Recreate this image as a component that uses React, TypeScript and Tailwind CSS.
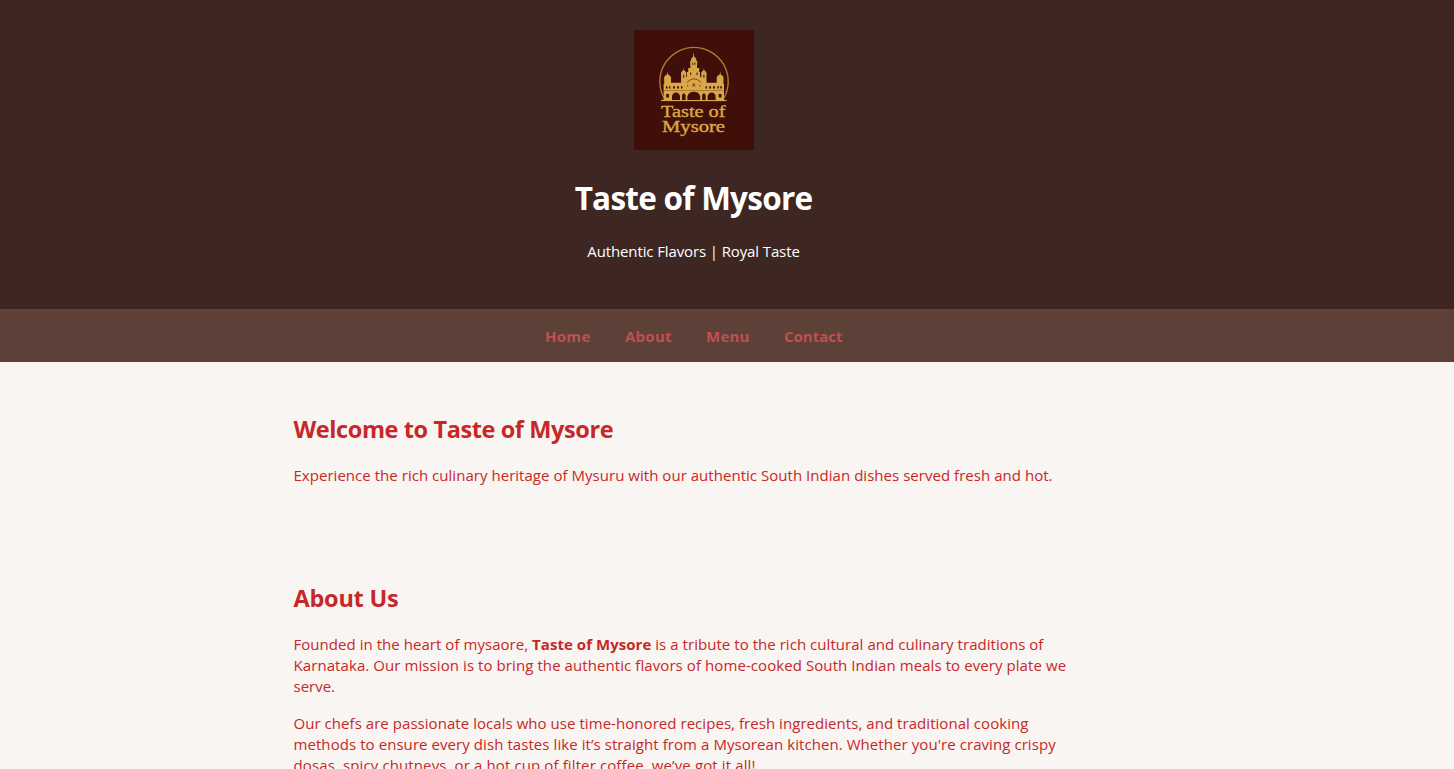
function Logo() {
  return (
    <svg
      viewBox="0 0 120 120"
      className="block size-[120px] bg-[#400f09]"
      role="img"
      aria-label="Taste of Mysore"
    >
      <path d="M30 68 A34.2 34.2 0 1 1 90 68" fill="none" stroke="#b07a30" strokeWidth="1.4" />
      <g fill="#d9a648">
        {/* central tower */}
        <path d="M59.7 22.5 L60.4 27 Q62.8 28 62.4 31 H63.2 V35 H63 V38 H65.2 V42 H66 V47 H67.5 V53 H51.5 V47 H53 V42 H54.2 V38 H56.4 V35 H56.2 V31 H57 Q56.6 28 59 27 Z" />
        {/* inner turrets */}
        <path d="M49.7 38 L50.2 40.6 Q53 42 52.3 44.5 V53 H47.1 V44.5 Q46.4 42 49.2 40.6 Z" />
        <path d="M69.9 38 L70.4 40.6 Q73.2 42 72.5 44.5 V53 H67.3 V44.5 Q66.6 42 69.4 40.6 Z" />
        {/* outer domes */}
        <path d="M33.5 41.5 L34 44.4 Q37.8 46 37 49.5 V54 H30.2 V49.5 Q29.4 46 33 44.4 Z" />
        <path d="M86.2 41.5 L86.7 44.4 Q90.3 46 89.5 49.5 V54 H82.7 V49.5 Q81.9 46 85.7 44.4 Z" />
        <path d="M47 53 Q53 47 60 46 Q67 47 73 53 V56 H47 Z" />
        <path d="M37 52.7 H83 V54 H90 V70 H29.6 V54 H37 Z" />
        <rect x="27" y="69.9" width="65.5" height="1.2" />
      </g>
      <g fill="#400f09">
        <path d="M53.4 69.9 V66.5 Q54.3 62 59.8 61.8 Q65.2 62 66.2 66.5 V69.9 Z" />
        <path d="M38 69.9 V66 Q39 62.6 42 62.4 Q45.2 62.6 46 66 V69.9 Z" />
        <path d="M73.6 69.9 V66 Q74.6 62.6 77.6 62.4 Q80.8 62.6 81.6 66 V69.9 Z" />
        <path d="M48 69.9 V65 Q49.8 61.4 51.6 65 V69.9 Z" />
        <path d="M68.1 69.9 V65 Q69.9 61.4 71.7 65 V69.9 Z" />
        <path d="M32.2 67.5 V64 H35 V67.5 Z M84.7 67.5 V64 H87.5 V67.5 Z" />
        <path d="M32 56.3h1.6v2.2H32z M35 56.3h1.4v2.2H35z M39 56.3h1.8v2.2h-1.8z M43 56.3h1.8v2.2h-1.8z M47 56.3h1.4v2.2H47z M71.6 56.3H73v2.2h-1.4z M75.2 56.3h1.8v2.2h-1.8z M79 56.3h1.8v2.2h-1.8z M83.4 56.3h1.4v2.2h-1.4z M86.3 56.3h1.6v2.2h-1.6z" />
        <path d="M58.4 32.5h.8v2.4h-.8z M60.5 32.5h.8v2.4h-.8z M49.2 44.8h1v3h-1z M69.4 44.8h1v3h-1z M56.2 42.5h1v2.4h-1z M62.6 42.5h1v2.4h-1z" />
      </g>
      <path d="M53 52.5 Q60 45 67 52.5" fill="none" stroke="#6b3015" strokeWidth=".8" />
      <path d="M58.4 56.4 V54.4 Q59.8 52.2 61.2 54.4 V56.4 Z M53 55h1.4v1.6h-1.4z M65.4 55h1.4v1.6h-1.4z" fill="#8b541f" />
      <path d="M30 60.5 H89.5" stroke="#8b541f" strokeWidth=".5" />
      <g fill="#d9a648" fontFamily="'Liberation Serif', serif" fontSize="17.2" stroke="#d9a648" strokeWidth=".4">
        <text x="27" y="86.6" textLength="64.5" lengthAdjust="spacingAndGlyphs">Taste of</text>
        <text x="28" y="102" textLength="63" lengthAdjust="spacingAndGlyphs">Mysore</text>
      </g>
    </svg>
  );
}

export default function App() {
  return (
    <div className="h-[769px] overflow-hidden bg-[#f9f5f2] font-['Open_Sans','Noto_Sans',sans-serif] text-[15px] leading-[21px] text-[#c62828]">
      <header className="flex h-[309px] flex-col items-center bg-[#3e2723] pt-[30px] pr-[67px] text-white">
        <Logo />
        <h1 className="mt-[26px] text-[31.5px] leading-[43px] font-bold tracking-[-0.75px] whitespace-nowrap">Taste of Mysore</h1>
        <p className="mt-[22px] tracking-[-0.12px] whitespace-nowrap">Authentic Flavors | Royal Taste</p>
      </header>
      <nav className="flex h-[53px] bg-[#5d4037] pt-[17px] pl-[545px] font-bold text-[#c05050]">
        <a className="w-20 tracking-[0.3px]">Home</a>
        <a className="w-[81px] tracking-[0.25px]">About</a>
        <a className="w-[78px] tracking-[0.25px]">Menu</a>
        <a>Contact</a>
      </nav>
      <main className="ml-[293.5px] w-[800px] whitespace-nowrap">
        <section className="h-[169px] pt-[51px]">
          <h2 className="text-[23.5px] leading-8 font-bold tracking-[-0.4px]">Welcome to Taste of Mysore</h2>
          <p className="mt-5 tracking-[0.035px]">
            Experience the rich culinary heritage of Mysuru with our authentic South Indian dishes served fresh and hot.
          </p>
        </section>
        <section className="pt-[51px]">
          <h2 className="text-[23.5px] leading-8 font-bold tracking-[-0.25px]">About Us</h2>
          <p className="mt-5">
            <span className="block tracking-[0.045px]">
              Founded in the heart of mysaore, <strong>Taste of Mysore</strong> is a tribute to the rich cultural and culinary traditions of
            </span>
            <span className="block tracking-[0.08px]">Karnataka. Our mission is to bring the authentic flavors of home-cooked South Indian meals to every plate we</span>
            <span className="block">serve.</span>
          </p>
          <p className="mt-4">
            <span className="block tracking-[0.05px]">Our chefs are passionate locals who use time-honored recipes, fresh ingredients, and traditional cooking</span>
            <span className="block tracking-[0.07px]">methods to ensure every dish tastes like it’s straight from a Mysorean kitchen. Whether you're craving crispy</span>
            <span className="block tracking-[0.12px]">dosas, spicy chutneys, or a hot cup of filter coffee, we’ve got it all!</span>
          </p>
        </section>
      </main>
    </div>
  );
}
